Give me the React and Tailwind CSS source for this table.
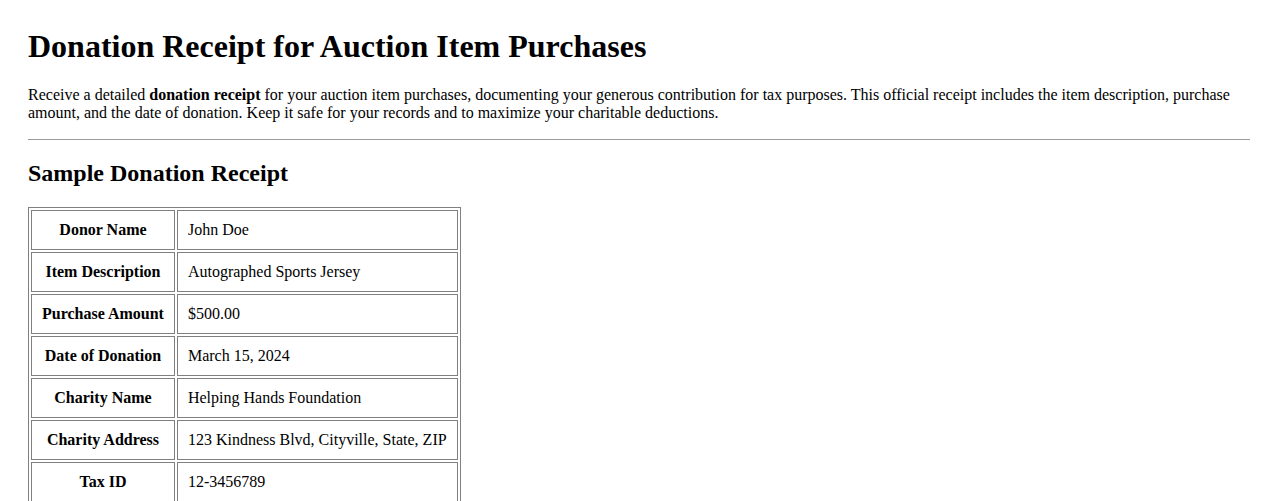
const rows = [
  ["Donor Name", "John Doe"],
  ["Item Description", "Autographed Sports Jersey"],
  ["Purchase Amount", "$500.00"],
  ["Date of Donation", "March 15, 2024"],
  ["Charity Name", "Helping Hands Foundation"],
  ["Charity Address", "123 Kindness Blvd, Cityville, State, ZIP"],
  ["Tax ID", "12-3456789"],
];

const App = () => {
  return (
    <div className="min-h-screen bg-white px-[28px] pt-[28px] pb-[28px] text-[16px] leading-[1.15] text-black font-['Liberation_Serif',serif]">
      {/* HEADER */}
      <h1 className="text-[32px] font-bold leading-[1.15] mb-[21px]">
        Donation Receipt for Auction Item Purchases
      </h1>
      <p className="mb-[16px]">
        Receive a detailed <strong className="font-bold">donation receipt</strong> for your
        auction item purchases, documenting your generous contribution for tax purposes. This
        official receipt includes the item description, purchase amount, and the date of
        donation. Keep it safe for your records and to maximize your charitable deductions.
      </p>
      <hr className="border-0 border-t border-[#9a9a9a]" />

      {/* SAMPLE */}
      <h2 className="text-[24px] font-bold leading-[1.15] mt-[20px] mb-[20px]">
        Sample Donation Receipt
      </h2>
      <table className="border-separate border-spacing-[2px] border border-[#808080]">
        <tbody>
          {rows.map(([label, value]) => (
            <tr key={label}>
              <th className="border border-[#808080] p-[10px] leading-[18px] font-bold text-center">
                {label}
              </th>
              <td className="border border-[#808080] p-[10px] leading-[18px] text-left">
                {value}
              </td>
            </tr>
          ))}
        </tbody>
      </table>
    </div>
  );
};

export default App;
